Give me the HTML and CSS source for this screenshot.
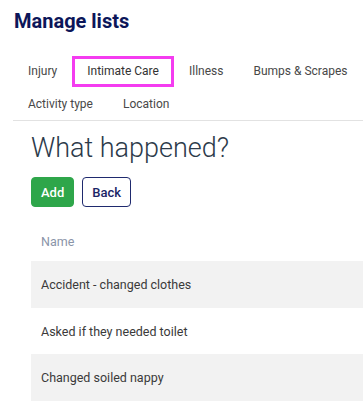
FILE: index.html
```html
<!DOCTYPE html>
<html>
<head>
<meta charset="utf-8" />
<title>Manage lists</title>
<link rel="stylesheet" href="styles.css">
</head>
<body>
<h1 class="page-title">Manage lists</h1>
<ul class="tabs">
	<li><a href="#">Injury</a></li>
	<li class="active"><a href="#">Intimate Care</a></li>
	<li><a href="#">Illness</a></li>
	<li><a href="#">Bumps &amp; Scrapes</a></li>
	<li><a href="#">Activity type</a></li>
	<li><a href="#">Location</a></li>
</ul>
<div class="panel">
	<h2 class="panel-title">What happened?</h2>
	<div class="actions">
		<button class="btn btn-add">Add</button>
		<button class="btn btn-back">Back</button>
	</div>
	<table class="list">
		<thead>
			<tr><th>Name</th></tr>
		</thead>
		<tbody>
			<tr><td>Accident - changed clothes</td></tr>
			<tr><td>Asked if they needed toilet</td></tr>
			<tr><td>Changed soiled nappy</td></tr>
		</tbody>
	</table>
</div>
</body>
</html>
```

FILE: styles.css
```css
*{ margin:0; padding:0; box-sizing:border-box;}
li{ list-style:none;}
body{ font-family:Roboto, "Liberation Sans", sans-serif; background:#fff; overflow:hidden;}
.page-title{ margin:9px 0 0 14px; font-size:20px; line-height:24px; font-weight:700; color:#0c1659;}
.tabs{ display:flex; flex-wrap:wrap; row-gap:2px; margin:23px 0 0 13px; border-bottom:1px solid #e2e2e2;}
.tabs a{ display:block; padding:5px 12px; border:3px solid transparent; font-size:12px; line-height:15px; color:#484848; text-decoration:none;}
.tabs .active a{ border-color:#f43cf0; color:#333;}
.panel{ margin-left:31px;}
.panel-title{ margin-top:10px; font-size:27px; line-height:34px; font-weight:300; color:#2c3a4a;}
.actions{ display:flex; gap:8px; margin-top:12px;}
.btn{ height:30px; padding:0 9px; border-radius:4px; font-family:inherit; font-size:13px; font-weight:500; cursor:pointer;}
.btn-add{ background:#2ea64a; border:1px solid #2ea64a; color:#fff;}
.btn-back{ background:#fff; border:1px solid #1f2a6e; color:#1a2466;}
.list{ width:100%; margin-top:15px; border-collapse:collapse;}
.list th{ padding:12px 10px; font-size:12.5px; line-height:15px; font-weight:400; color:#8a94a8; text-align:left;}
.list td{ padding:16px 10px 15.5px; font-size:12.5px; line-height:15px; color:#3a3a3a;}
.list tbody tr:nth-child(odd){ background:#f2f2f2;}
```
